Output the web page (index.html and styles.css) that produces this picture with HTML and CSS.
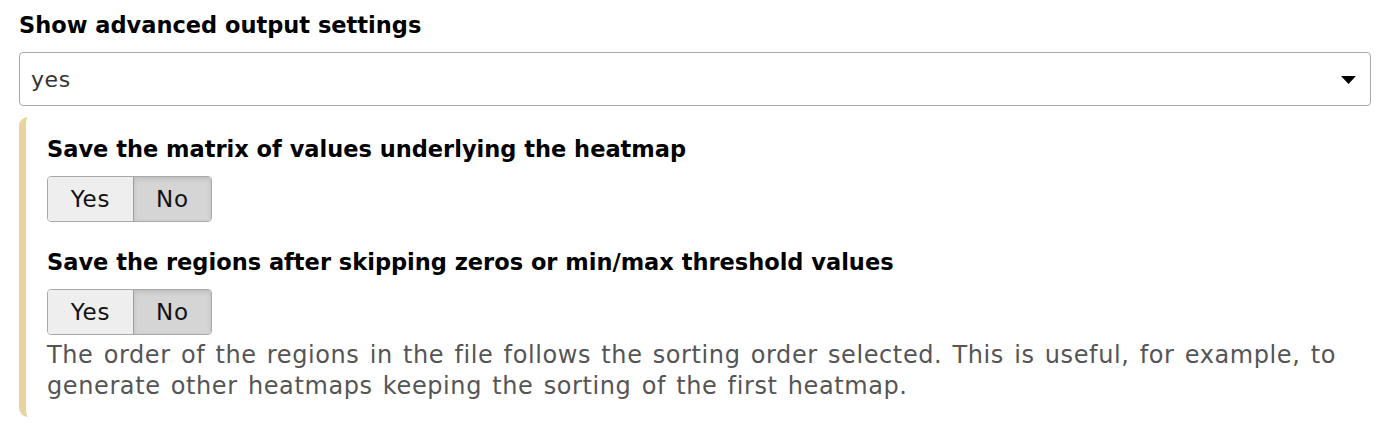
FILE: index.html
```html
<!DOCTYPE html>
<html>
<head>
<meta charset="utf-8">
<link rel="stylesheet" href="styles.css">
</head>
<body>
<div class="page">
  <div class="field">
    <label class="label">Show advanced output settings</label>
    <div class="select">
      <span class="select-value">yes</span>
      <svg class="caret" width="15" height="8" viewBox="0 0 15 8"><path d="M0 0 H15 L7.5 8 Z" fill="#000"/></svg>
    </div>
  </div>
  <div class="section">
    <div class="field">
      <label class="label">Save the matrix of values underlying the heatmap</label>
      <div class="toggle">
        <span class="btn">Yes</span><span class="btn active">No</span>
      </div>
    </div>
    <div class="field">
      <label class="label">Save the regions after skipping zeros or min/max threshold values</label>
      <div class="toggle">
        <span class="btn">Yes</span><span class="btn active">No</span>
      </div>
      <div class="help">The order of the regions in the file follows the sorting order selected. This is useful, for example, to generate other heatmaps keeping the sorting of the first heatmap.</div>
    </div>
  </div>
</div>
</body>
</html>
```
FILE: styles.css
```css
html, body {
  margin: 0;
  padding: 0;
  background: #fff;
}
body {
  font-family: "DejaVu Sans", Verdana, sans-serif;
  font-size: 22px;
  color: #000;
}
.page {
  padding: 10px 13px 0 19px;
}
.label {
  display: block;
  font-weight: bold;
  font-size: 22.5px;
  line-height: 30px;
  margin-bottom: 12px;
}
.select {
  display: flex;
  align-items: center;
  justify-content: space-between;
  height: 54px;
  border: 1px solid #a9a9a9;
  border-radius: 4px;
  padding: 0 14px 0 11px;
  box-sizing: border-box;
}
.select-value {
  color: #333;
  font-size: 22px;
  letter-spacing: 0.6px;
}
.caret {
  margin-top: 2px;
}
.section {
  margin-top: 11px;
  border-left: 7px solid #e7d4a0;
  border-radius: 9px 0 0 9px;
  padding: 17px 0 15px 21px;
}
.section .field + .field {
  margin-top: 25px;
}
.toggle {
  display: inline-flex;
  border: 1px solid #a9a9a9;
  border-radius: 4px;
  overflow: hidden;
}
.btn {
  height: 44px;
  line-height: 44px;
  background: #eee;
  color: #111;
  font-size: 23px;
  letter-spacing: 0.8px;
  text-align: center;
}
.btn:first-child {
  width: 85px;
}
.btn.active {
  width: 77px;
  background: #d5d5d5;
  border-left: 1px solid #a0a0a0;
  box-shadow: inset 0 2px 5px rgba(0,0,0,0.12);
}
.help {
  color: #555;
  font-size: 24px;
  letter-spacing: 0.6px;
  word-spacing: 2px;
  line-height: 31px;
  margin-top: 5px;
}
```
